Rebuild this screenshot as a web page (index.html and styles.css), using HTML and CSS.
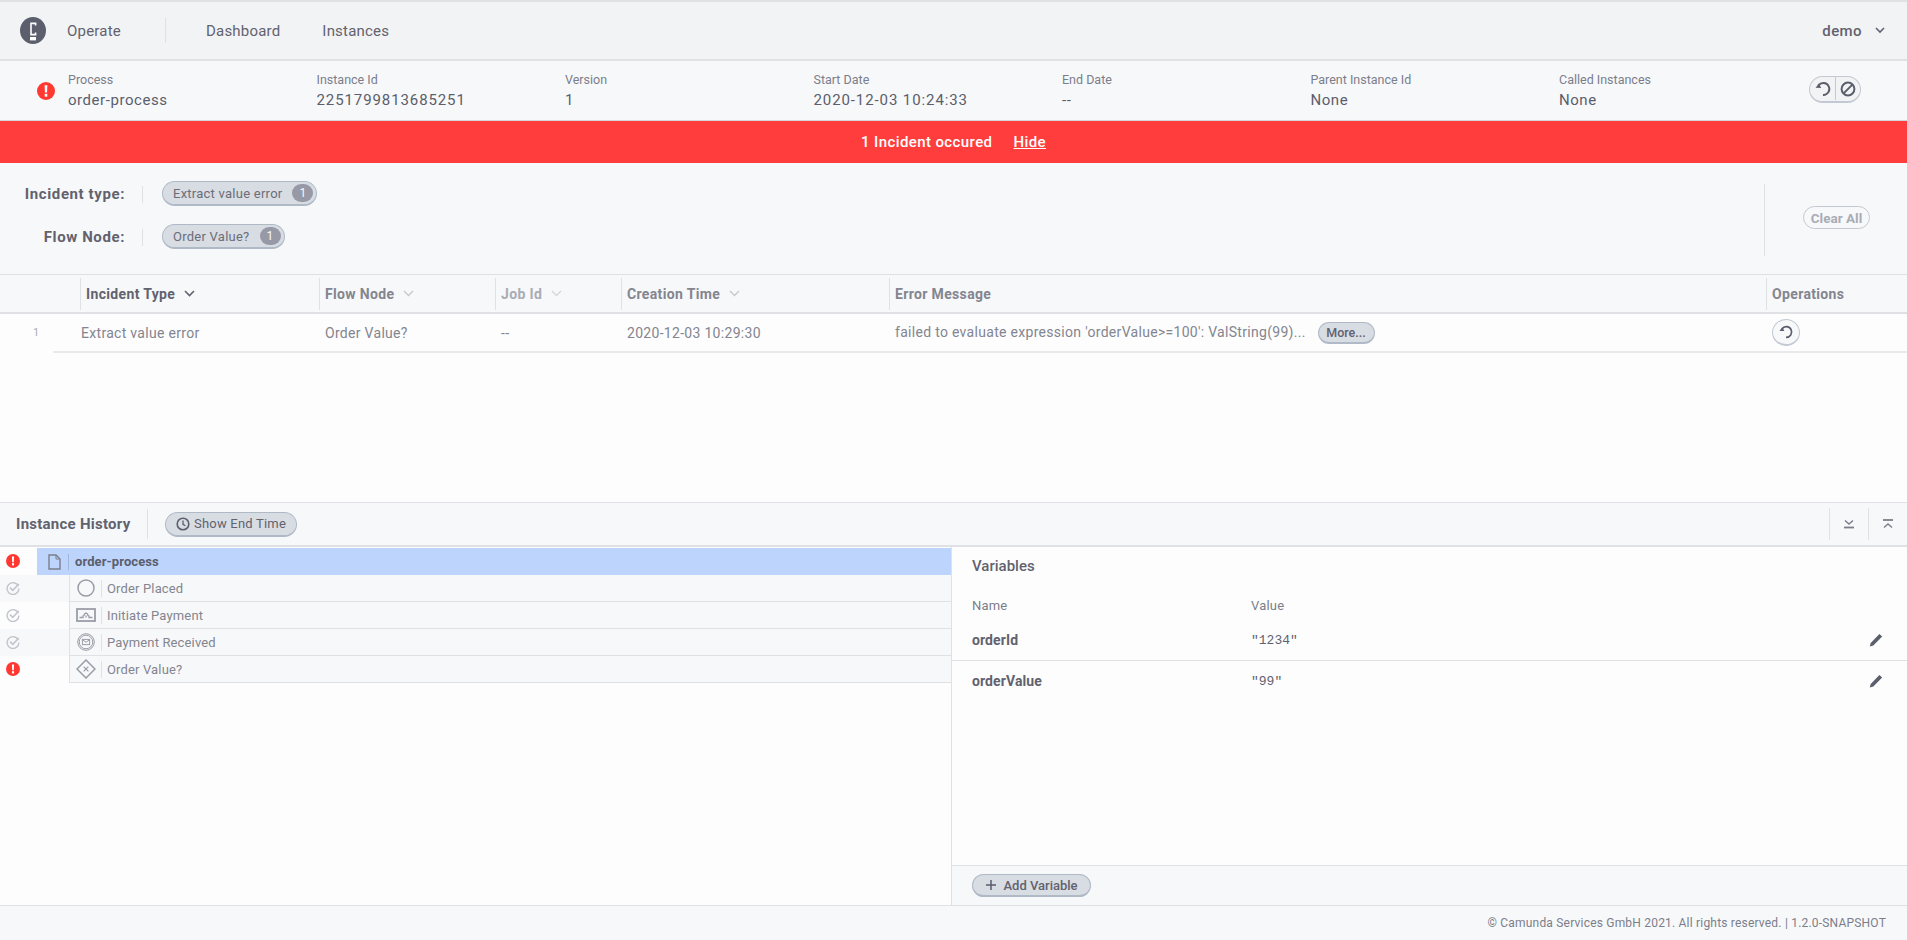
FILE: index.html
```html
<!DOCTYPE html>
<html>

<head>
    <meta charset="UTF-8">
    <title>Camunda Operate</title>
    <link rel="stylesheet" href="styles.css">
</head>

<body>
    <svg class="defs" width="0" height="0">
        <symbol id="err" viewBox="0 0 14 14">
            <circle cx="7" cy="7" r="7" fill="#ff3832"/>
            <path d="M5.9 2.6h2.2l-.3 5.6H6.2z" fill="#fff"/>
            <rect x="6" y="9.2" width="2" height="2.2" fill="#fff"/>
        </symbol>
        <symbol id="ok" viewBox="0 0 14 14">
            <path d="M12.4 5.2A5.9 5.9 0 1 0 12.9 7.5" fill="none" stroke="#c2c5cb" stroke-width="1.4"/>
            <path d="M4 6.6l2.8 2.8 6-6.4" fill="none" stroke="#c2c5cb" stroke-width="1.6"/>
        </symbol>
        <symbol id="pencil" viewBox="0 0 14 14">
            <path d="M.8 13.4l.9-3.4 8.7-9 2.8 2.6-8.9 8.8z" fill="#5b5e6c"/>
        </symbol>
    </svg>

    <header class="topbar">
        <svg class="logo" width="26" height="27" viewBox="0 0 26 27">
            <ellipse cx="13" cy="13.5" rx="13" ry="13.5" fill="#5b5e6c"/>
            <path d="M15.6 8.6V6.4h-4.6v11.2h4.6v-2.2" fill="none" stroke="#fff" stroke-width="1.6"/>
            <rect x="10" y="20" width="6" height="3.4" fill="#fff"/>
        </svg>
        <span class="brand">Operate</span>
        <nav class="nav">
            <a>Dashboard</a>
            <a>Instances</a>
        </nav>
        <div class="user">
            demo
            <svg width="10" height="7" viewBox="0 0 10 7"><path d="M1 1l4 4 4-4" fill="none" stroke="#62626e" stroke-width="1.6"/></svg>
        </div>
    </header>

    <section class="instance">
        <svg class="instance-icon" width="18" height="18"><use href="#err"/></svg>
        <div class="fields">
            <div class="field"><label>Process</label><b>order-process</b></div>
            <div class="field"><label>Instance Id</label><b class="digits">2251799813685251</b></div>
            <div class="field"><label>Version</label><b>1</b></div>
            <div class="field"><label>Start Date</label><b class="digits">2020-12-03 10:24:33</b></div>
            <div class="field"><label>End Date</label><b>--</b></div>
            <div class="field"><label>Parent Instance Id</label><b>None</b></div>
            <div class="field"><label>Called Instances</label><b>None</b></div>
        </div>
        <div class="ops">
            <svg width="18" height="18" viewBox="0 0 18 18">
                <path d="M4.4 5.6A6 6 0 1 1 9 15" fill="none" stroke="#5b5e6c" stroke-width="1.9"/>
                <path d="M1.6 7.8l5.6.2-2.4-4.4z" fill="#5b5e6c"/>
            </svg>
            <i></i>
            <svg width="18" height="18" viewBox="0 0 18 18">
                <circle cx="9" cy="9" r="6.4" fill="none" stroke="#5b5e6c" stroke-width="2"/>
                <path d="M4.6 13.4l8.8-8.8" stroke="#5b5e6c" stroke-width="2"/>
            </svg>
        </div>
    </section>

    <div class="banner">1 Incident occured <a>Hide</a></div>

    <section class="filters">
        <div class="filter-rows">
            <div class="filter-row">
                <span class="filter-label">Incident type:</span>
                <div class="chip">Extract value error <em>1</em></div>
            </div>
            <div class="filter-row">
                <span class="filter-label">Flow Node:</span>
                <div class="chip">Order Value? <em>1</em></div>
            </div>
        </div>
        <div class="filter-clear">
            <button class="clear">Clear All</button>
        </div>
    </section>

    <section class="incidents">
        <div class="thead">
            <div></div>
            <div class="th on">Incident Type <svg width="11" height="7" viewBox="0 0 11 7"><path d="M1 1l4.5 4.5L10 1" fill="none" stroke="#62626e" stroke-width="1.6"/></svg></div>
            <div class="th dim">Flow Node <svg width="11" height="7" viewBox="0 0 11 7"><path d="M1 1l4.5 4.5L10 1" fill="none" stroke="#c6c9d0" stroke-width="1.4"/></svg></div>
            <div class="th dimmer">Job Id <svg width="11" height="7" viewBox="0 0 11 7"><path d="M1 1l4.5 4.5L10 1" fill="none" stroke="#d3d6db" stroke-width="1.4"/></svg></div>
            <div class="th dim">Creation Time <svg width="11" height="7" viewBox="0 0 11 7"><path d="M1 1l4.5 4.5L10 1" fill="none" stroke="#c6c9d0" stroke-width="1.4"/></svg></div>
            <div class="th dim">Error Message</div>
            <div class="th dim">Operations</div>
        </div>
        <div class="trow">
            <div class="num">1</div>
            <div class="td first">Extract value error</div>
            <div class="td">Order Value?</div>
            <div class="td">--</div>
            <div class="td">2020-12-03 10:29:30</div>
            <div class="td">failed to evaluate expression 'orderValue&gt;=100': ValString(99)... <button class="more">More...</button></div>
            <div class="td retry-cell">
                <span class="retry">
                    <svg width="16" height="16" viewBox="0 0 18 18">
                        <path d="M4.4 5.6A6 6 0 1 1 9 15" fill="none" stroke="#5b5e6c" stroke-width="1.9"/>
                        <path d="M1.6 7.8l5.6.2-2.4-4.4z" fill="#5b5e6c"/>
                    </svg>
                </span>
            </div>
        </div>
    </section>

    <section class="history-bar">
        <span class="history-title">Instance History</span>
        <button class="end-time">
            <svg width="14" height="14" viewBox="0 0 14 14">
                <circle cx="7" cy="7" r="5.8" fill="none" stroke="#5b5e6c" stroke-width="1.6"/>
                <path d="M7 3.6V7.4l2.4 1.4" fill="none" stroke="#5b5e6c" stroke-width="1.3"/>
            </svg>
            Show End Time
        </button>
        <div class="collapse">
            <span><svg width="12" height="12" viewBox="0 0 12 12"><path d="M2 2.5l4 3.5 4-3.5" fill="none" stroke="#7b7e8a" stroke-width="1.4"/><path d="M1 9.5h10" stroke="#7b7e8a" stroke-width="1.8"/></svg></span>
            <span><svg width="12" height="12" viewBox="0 0 12 12"><path d="M1 2h10" stroke="#7b7e8a" stroke-width="1.8"/><path d="M2 9.5l4-3.5 4 3.5" fill="none" stroke="#7b7e8a" stroke-width="1.4"/></svg></span>
        </div>
    </section>

    <main class="split">
        <div class="tree">
            <div class="node root">
                <svg class="status" width="14" height="14"><use href="#err"/></svg>
                <div class="node-body">
                    <span class="node-icon">
                        <svg width="13" height="16" viewBox="0 0 13 16"><path d="M1 1h7l4 4v10H1z" fill="none" stroke="#7b7e8a" stroke-width="1.4"/><path d="M8 1v4h4" fill="none" stroke="#7b7e8a"/></svg>
                    </span>
                    <b>order-process</b>
                </div>
            </div>
            <div class="node child">
                <svg class="status" width="14" height="14"><use href="#ok"/></svg>
                <div class="node-body">
                    <span class="node-icon">
                        <svg width="18" height="18" viewBox="0 0 18 18"><circle cx="9" cy="9" r="8" fill="none" stroke="#9a9da7" stroke-width="1.5"/></svg>
                    </span>
                    <span>Order Placed</span>
                </div>
            </div>
            <div class="node child">
                <svg class="status" width="14" height="14"><use href="#ok"/></svg>
                <div class="node-body">
                    <span class="node-icon">
                        <svg width="20" height="14" viewBox="0 0 20 14"><rect x="1" y="1" width="18" height="12" fill="none" stroke="#9a9da7" stroke-width="1.8"/><path d="M3.5 9.5H7V8l1-.5.5-1.5L10 5l1.500 1 .5 1.500 1 .5v1.500h3.500M10 7.500v2" fill="none" stroke="#9a9da7" stroke-width="1.3"/></svg>
                    </span>
                    <span>Initiate Payment</span>
                </div>
            </div>
            <div class="node child">
                <svg class="status" width="14" height="14"><use href="#ok"/></svg>
                <div class="node-body">
                    <span class="node-icon">
                        <svg width="18" height="18" viewBox="0 0 18 18"><circle cx="9" cy="9" r="8.300" fill="none" stroke="#9a9da7"/><circle cx="9" cy="9" r="6.800" fill="none" stroke="#9a9da7"/><rect x="5.400" y="6.400" width="7.200" height="5.200" fill="none" stroke="#9a9da7"/><path d="M5.400 6.800L9 9.200l3.600-2.400" fill="none" stroke="#9a9da7"/></svg>
                    </span>
                    <span>Payment Received</span>
                </div>
            </div>
            <div class="node child">
                <svg class="status" width="14" height="14"><use href="#err"/></svg>
                <div class="node-body">
                    <span class="node-icon">
                        <svg width="20" height="20" viewBox="0 0 20 20"><path d="M10 1l9 9-9 9-9-9z" fill="none" stroke="#9a9da7" stroke-width="1.500"/><path d="M7.600 7.600l4.800 4.800M12.400 7.600l-4.800 4.800" stroke="#9a9da7" stroke-width="1.200"/></svg>
                    </span>
                    <span>Order Value?</span>
                </div>
            </div>
        </div>
        <div class="vars">
            <div class="vars-main">
                <h3>Variables</h3>
                <div class="var-head"><span>Name</span><span>Value</span></div>
                <div class="var-row divided">
                    <b>orderId</b><code>"1234"</code>
                    <svg width="14" height="14"><use href="#pencil"/></svg>
                </div>
                <div class="var-row">
                    <b>orderValue</b><code>"99"</code>
                    <svg width="14" height="14"><use href="#pencil"/></svg>
                </div>
            </div>
            <div class="vars-foot">
                <button class="add"><svg width="12" height="12" viewBox="0 0 12 12"><path d="M6 1v10M1 6h10" stroke="#5b5e6c" stroke-width="1.500"/></svg> Add Variable</button>
            </div>
        </div>
    </main>

    <footer class="footer">© Camunda Services GmbH 2021. All rights reserved. | 1.2.0-SNAPSHOT</footer>
</body>

</html>
```

FILE: styles.css
```css
* {
    box-sizing: border-box;
}

html,
body {
    height: 100%;
}

body {
    margin: 0;
    height: 940px;
    display: flex;
    flex-direction: column;
    overflow: hidden;
    background-color: #fdfdfe;
    color: #62626e;
    font-family: Roboto, "Noto Sans", sans-serif;
    font-size: 14px;
}

button {
    font-family: inherit;
    color: #62626e;
}

.defs {
    display: block;
    height: 0;
}

/* top bar */

.topbar {
    height: 61px;
    flex: none;
    display: flex;
    align-items: center;
    padding: 0 20px;
    background-color: #f2f3f5;
    border-top: 2px solid #dfe1e5;
    border-bottom: 2px solid #dfe1e5;
}

.logo {
    flex: none;
}

.brand {
    margin-left: 21px;
    width: 98px;
    font-size: 15px;
    letter-spacing: .2px;
}

.nav {
    display: flex;
    gap: 42px;
    height: 25px;
    align-items: center;
    padding-left: 40px;
    border-left: 1px solid #dfe1e5;
    font-size: 15px;
    letter-spacing: .2px;
}

.user {
    margin-left: auto;
    display: flex;
    align-items: center;
    gap: 13px;
    padding-right: 2px;
    font-size: 15px;
    font-weight: 500;
    letter-spacing: .4px;
}

/* instance header */

.instance {
    height: 60px;
    flex: none;
    display: flex;
    align-items: center;
    padding-left: 37px;
    background-color: #f7f8fa;
    border-bottom: 1px solid #d4d6da;
}

.instance-icon {
    flex: none;
    margin-right: 13px;
}

.fields {
    width: 1741px;
    display: grid;
    grid-template-columns: repeat(7, 248.5px);
}

.field label {
    display: block;
    font-size: 12.5px;
    color: #7b7e8a;
    margin-bottom: 4px;
}

.field b {
    display: block;
    font-weight: 400;
    font-size: 15px;
    letter-spacing: .55px;
    color: #5b5e6c;
}

.field b.digits {
    letter-spacing: .9px;
}

.ops {
    width: 52px;
    height: 27px;
    margin-top: -3px;
    display: flex;
    align-items: center;
    justify-content: space-between;
    padding: 0 3px 0 4px;
    background-color: #f2f3f5;
    border: 1px solid #c3c9d3;
    border-bottom-width: 2px;
    border-radius: 14px;
}

.ops i {
    width: 1px;
    height: 23px;
    background-color: #c3c9d3;
}

/* incident banner */

.banner {
    height: 42px;
    flex: none;
    display: flex;
    align-items: center;
    justify-content: center;
    gap: 21px;
    background-color: #ff3d3d;
    color: #fff;
    font-size: 15px;
    font-weight: 500;
    letter-spacing: .4px;
}

.banner a {
    text-decoration: underline;
}

/* filters */

.filters {
    height: 112px;
    flex: none;
    display: flex;
    background-color: #f7f8fa;
    border-bottom: 1px solid #dfe1e5;
}

.filter-rows {
    flex: 1;
    padding-top: 18px;
}

.filter-row {
    display: flex;
    align-items: center;
    height: 25px;
    margin-bottom: 18px;
}

.filter-label {
    width: 143px;
    height: 17px;
    padding-right: 17px;
    line-height: 17px;
    margin-top: 2px;
    text-align: right;
    font-size: 15px;
    font-weight: 700;
    letter-spacing: .6px;
    border-right: 1px solid #dfe1e5;
}

.chip {
    margin-left: 19px;
    height: 25px;
    display: flex;
    align-items: center;
    padding: 0 3px 0 10px;
    gap: 10px;
    background-color: #d8dce3;
    border: 1px solid #b0bac7;
    border-bottom-width: 2px;
    border-radius: 13px;
    font-size: 13px;
    letter-spacing: .25px;
    color: #6b6d7a;
}

.chip em {
    width: 21px;
    height: 18px;
    line-height: 18px;
    text-align: center;
    font-style: normal;
    font-size: 12px;
    color: #f7f8fa;
    background-color: #979aa6;
    border-radius: 9px;
}

.filter-clear {
    width: 143px;
    flex: none;
    height: 72px;
    margin-top: 21px;
    padding-left: 38px;
    padding-top: 22px;
    border-left: 1px solid #dfe1e5;
}

.clear {
    display: block;
    width: 67px;
    height: 23px;
    padding: 0;
    background-color: #f7f8fa;
    border: 1px solid #c3c9d3;
    border-radius: 12px;
    font-size: 13.5px;
    font-weight: 700;
    color: #a9acb5;
}

/* incidents table */

.incidents {
    height: 227px;
    flex: none;
}

.thead,
.trow {
    display: grid;
    grid-template-columns: 80px 239px 176px 126px 268px 877px 141px;
    align-items: center;
}

.thead {
    height: 39px;
    background-color: #f7f8fa;
    border-bottom: 2px solid #dfe1e5;
}

.th {
    height: 32px;
    display: flex;
    align-items: center;
    gap: 9px;
    padding-left: 5px;
    border-left: 1px solid #dfe1e5;
    font-size: 14px;
    font-weight: 700;
    letter-spacing: .35px;
}

.th.dim {
    color: #83858f;
}

.th.dimmer {
    color: #a9acb5;
}

.trow {
    height: 39px;
    margin-left: 53px;
    grid-template-columns: 27px 239px 176px 126px 268px 877px 141px;
    border-bottom: 2px solid #e8eaee;
    color: #83858f;
}

.num {
    margin-left: -20px;
    font-size: 11px;
    color: #a9acb5;
}

.td {
    padding-left: 6px;
    font-size: 14px;
    letter-spacing: .3px;
    white-space: nowrap;
}

.td.first {
    padding-left: 1px;
}

.more {
    width: 57px;
    height: 22px;
    padding: 0;
    margin-left: 8px;
    background-color: #d8dce3;
    border: 1px solid #b0bac7;
    border-bottom-width: 2px;
    border-radius: 11px;
    font-size: 12.5px;
    font-weight: 500;
}

.retry-cell {
    padding-left: 6px;
}

.retry {
    display: flex;
    width: 28px;
    height: 27px;
    align-items: center;
    justify-content: center;
    background-color: #f7f8fa;
    border: 1px solid #c3c9d3;
    border-bottom-width: 2px;
    border-radius: 50%;
}

/* instance history */

.history-bar {
    height: 45px;
    flex: none;
    display: flex;
    align-items: center;
    padding-left: 16px;
    background-color: #f7f8fa;
    border-top: 1px solid #dfe1e5;
    border-bottom: 2px solid #dfe1e5;
}

.history-title {
    width: 132px;
    height: 30px;
    line-height: 31px;
    font-size: 15px;
    font-weight: 700;
    letter-spacing: .25px;
    border-right: 1px solid #dfe1e5;
}

.end-time {
    margin-left: 17px;
    width: 132px;
    height: 25px;
    padding: 0;
    display: flex;
    align-items: center;
    justify-content: center;
    gap: 4px;
    background-color: #d8dce3;
    border: 1px solid #b0bac7;
    border-bottom-width: 2px;
    border-radius: 13px;
    font-size: 13px;
    letter-spacing: .2px;
}

.collapse {
    margin-left: auto;
    display: flex;
}

.collapse span {
    width: 39px;
    height: 32px;
    display: flex;
    align-items: center;
    justify-content: center;
    border-left: 1px solid #dfe1e5;
}

/* tree and variables */

.split {
    flex: 1;
    min-height: 0;
    display: flex;
}

.tree {
    width: 952px;
    flex: none;
    padding-top: 1px;
    border-right: 1px solid #dfe1e5;
}

.node {
    height: 27px;
    display: flex;
    position: relative;
    font-size: 13px;
    letter-spacing: .15px;
    color: #83858f;
}

.node:nth-child(even) {
    background-color: #f7f8fa;
}

.status {
    position: absolute;
    left: 6px;
    top: 6px;
}

.node-body {
    flex: 1;
    display: flex;
    align-items: center;
    border-bottom: 1px solid #dfe1e5;
}

.root .node-body {
    margin-left: 37px;
    background-color: #bdd4fd;
    border-bottom: 0;
    color: #5b5e6c;
    padding-left: 11px;
}

.root .node-icon {
    width: 21px;
    height: 16px;
    margin-right: 6px;
    border-right: 1px solid #a5b7d8;
}

.root b {
    font-weight: 700;
    letter-spacing: .1px;
}

.child .node-body {
    margin-left: 69px;
    background-color: #f7f8fa;
    border-left: 1px solid #dfe1e5;
}

.node-icon {
    display: flex;
    align-items: center;
}

.child .node-icon {
    width: 32px;
    height: 17px;
    flex: none;
    justify-content: center;
    margin-right: 5px;
    border-right: 1px solid #dfe1e5;
}

.vars {
    flex: 1;
    display: flex;
    flex-direction: column;
}

.vars-main {
    flex: 1;
}

.vars h3 {
    margin: 10px 0 23px 20px;
    font-size: 15px;
    line-height: 18px;
    font-weight: 500;
}

.var-head,
.var-row {
    display: grid;
    grid-template-columns: 279px 1fr 14px;
    padding: 0 24px 0 20px;
    align-items: center;
}

.var-head {
    font-size: 13px;
    color: #7b7e8a;
    letter-spacing: .2px;
    margin-bottom: 7px;
}

.var-row {
    height: 40px;
    font-size: 13px;
}

.var-row.divided {
    border-bottom: 1px solid #dfe1e5;
    height: 41px;
}

.var-row b {
    font-size: 14px;
    font-weight: 700;
    letter-spacing: .1px;
}

.var-row code {
    font-family: "Liberation Mono", monospace;
    font-size: 13px;
}

.vars-foot {
    height: 40px;
    flex: none;
    padding: 8px 0 0 20px;
    background-color: #f7f8fa;
    border-top: 1px solid #dfe1e5;
}

.add {
    width: 119px;
    height: 23px;
    padding: 0;
    display: flex;
    align-items: center;
    justify-content: center;
    gap: 6px;
    background-color: #d8dce3;
    border: 1px solid #b0bac7;
    border-bottom-width: 2px;
    border-radius: 12px;
    font-size: 13px;
    font-weight: 500;
}

/* footer */

.footer {
    height: 35px;
    flex: none;
    display: flex;
    align-items: center;
    justify-content: flex-end;
    padding-right: 21px;
    background-color: #f7f8fa;
    border-top: 1px solid #dfe1e5;
    font-size: 12px;
    color: #7b7e8a;
    letter-spacing: .2px;
}
```
